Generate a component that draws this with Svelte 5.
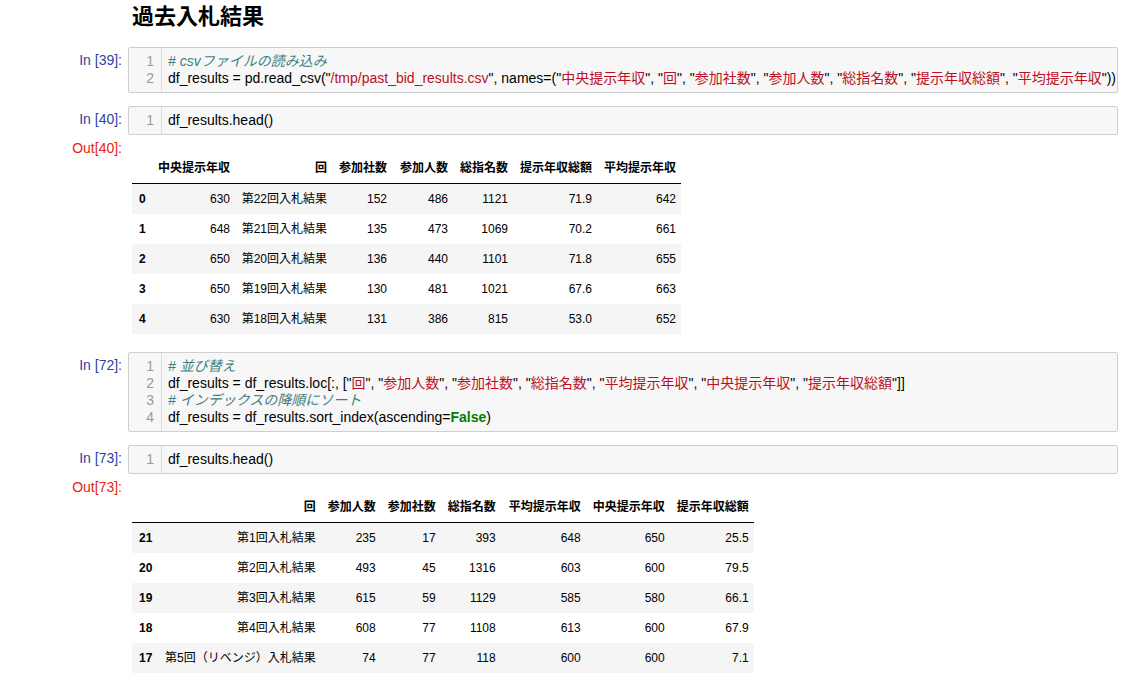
<script>
  const q = (s) => [{ t: 'p', v: '"' }, { t: 's', v: s }, { t: 'p', v: '"' }];
  const list = (names) => names.flatMap((n, i) => (i ? [{ t: 'p', v: ', ' }, ...q(n)] : q(n)));

  const cell1 = [
    [{ t: 'c', v: '# csvファイルの読み込み' }],
    [
      { t: 'p', v: 'df_results = pd.read_csv(' },
      ...q('/tmp/past_bid_results.csv'),
      { t: 'p', v: ', names=(' },
      ...list(['中央提示年収', '回', '参加社数', '参加人数', '総指名数', '提示年収総額', '平均提示年収']),
      { t: 'p', v: '))' }
    ]
  ];
  const head = [[{ t: 'p', v: 'df_results.head()' }]];
  const cell3 = [
    [{ t: 'c', v: '# 並び替え' }],
    [
      { t: 'p', v: 'df_results = df_results.loc[:, [' },
      ...list(['回', '参加人数', '参加社数', '総指名数', '平均提示年収', '中央提示年収', '提示年収総額']),
      { t: 'p', v: ']]' }
    ],
    [{ t: 'c', v: '# インデックスの降順にソート' }],
    [
      { t: 'p', v: 'df_results = df_results.sort_index(ascending=' },
      { t: 'k', v: 'False' },
      { t: 'p', v: ')' }
    ]
  ];

  const t1 = {
    widths: [21, 82, 97, 60, 61, 60, 84, 84],
    cols: ['', '中央提示年収', '回', '参加社数', '参加人数', '総指名数', '提示年収総額', '平均提示年収'],
    rows: [
      ['0', '630', '第22回入札結果', '152', '486', '1121', '71.9', '642'],
      ['1', '648', '第21回入札結果', '135', '473', '1069', '70.2', '661'],
      ['2', '650', '第20回入札結果', '136', '440', '1101', '71.8', '655'],
      ['3', '650', '第19回入札結果', '130', '481', '1021', '67.6', '663'],
      ['4', '630', '第18回入札結果', '131', '386', '815', '53.0', '652']
    ]
  };
  const t2 = {
    widths: [28, 160, 60, 60, 60, 85, 84, 84],
    cols: ['', '回', '参加人数', '参加社数', '総指名数', '平均提示年収', '中央提示年収', '提示年収総額'],
    rows: [
      ['21', '第1回入札結果', '235', '17', '393', '648', '650', '25.5'],
      ['20', '第2回入札結果', '493', '45', '1316', '603', '600', '79.5'],
      ['19', '第3回入札結果', '615', '59', '1129', '585', '580', '66.1'],
      ['18', '第4回入札結果', '608', '77', '1108', '613', '600', '67.9'],
      ['17', '第5回（リベンジ）入札結果', '74', '77', '118', '600', '600', '7.1']
    ]
  };
</script>

{#snippet code(n, lines)}
  <div class="cell">
    <div class="prompt in">In [{n}]:</div>
    <div class="box">
      <div class="gutter">
        {#each lines as _, i}<div>{i + 1}</div>{/each}
      </div>
      <div class="source">
        {#each lines as line}
          <div class="line">{#each line as tok}<span class={tok.t}>{tok.v}</span>{/each}</div>
        {/each}
      </div>
    </div>
  </div>
{/snippet}

{#snippet output(n, d)}
  <div class="out">
    <div class="prompt outp">Out[{n}]:</div>
    <table>
      <colgroup>
        {#each d.widths as w}<col style="width:{w}px" />{/each}
      </colgroup>
      <thead>
        <tr>{#each d.cols as c}<th>{c}</th>{/each}</tr>
      </thead>
      <tbody>
        {#each d.rows as r}
          <tr>
            {#each r as v, i}
              {#if i === 0}<th>{v}</th>{:else}<td>{v}</td>{/if}
            {/each}
          </tr>
        {/each}
      </tbody>
    </table>
  </div>
{/snippet}

<main class="nb">
  <h1>過去入札結果</h1>
  {@render code(39, cell1)}
  {@render code(40, head)}
  {@render output(40, t1)}
  {@render code(72, cell3)}
  {@render code(73, head)}
  {@render output(73, t2)}
</main>

<style>
  :global(body) {
    margin: 0;
    background: #fff;
  }
  .nb {
    display: flex;
    flex-direction: column;
    padding-right: 19px;
    font-family: "Liberation Sans", "Noto Sans CJK JP", sans-serif;
    font-size: 14px;
    color: #000;
  }
  h1 {
    margin: 0 0 13px 132px;
    font-size: 22px;
    line-height: 34px;
    font-weight: 700;
  }
  .cell {
    display: flex;
    margin-bottom: 13px;
  }
  .prompt {
    flex: 0 0 128px;
    box-sizing: border-box;
    padding: 5px 6px 0 0;
    text-align: right;
    line-height: 17px;
  }
  .in {
    color: #303f9f;
  }
  .outp {
    color: #e8240c;
    padding-top: 0;
  }
  .box {
    flex: 1;
    min-width: 0;
    display: flex;
    overflow: hidden;
    border: 1px solid #cfcfcf;
    border-radius: 2px;
    background: #f7f7f7;
    line-height: 17px;
  }
  .gutter {
    flex: 0 0 33px;
    box-sizing: border-box;
    padding: 5px 7px 5px 0;
    border-right: 1px solid #ddd;
    text-align: right;
    color: #999;
  }
  .source {
    flex: 1;
    min-width: 0;
    padding: 5px 0 5px 6px;
    overflow: hidden;
  }
  .line {
    height: 17px;
    white-space: pre;
  }
  .s {
    color: #ba0f24;
  }
  .c {
    color: #408080;
    font-style: italic;
  }
  .k {
    color: #008000;
    font-weight: 700;
  }
  .out {
    display: flex;
    margin-top: -8px;
    margin-bottom: 18px;
  }
  .out:last-child {
    margin-bottom: 0;
  }
  table {
    margin: 13px 0 0 4px;
    border-collapse: separate;
    border-spacing: 0;
    table-layout: fixed;
    font-size: 12px;
    line-height: 16px;
  }
  th,
  td {
    box-sizing: border-box;
    height: 30px;
    padding: 0 5px;
    text-align: right;
    white-space: nowrap;
    font-weight: 400;
    vertical-align: middle;
  }
  th {
    font-weight: 700;
  }
  thead th {
    height: 31px;
    border-bottom: 1px solid #000;
  }
  tbody th {
    text-align: left;
    padding-left: 7px;
  }
  tbody tr:nth-child(odd) {
    background: #f5f5f5;
  }
</style>
